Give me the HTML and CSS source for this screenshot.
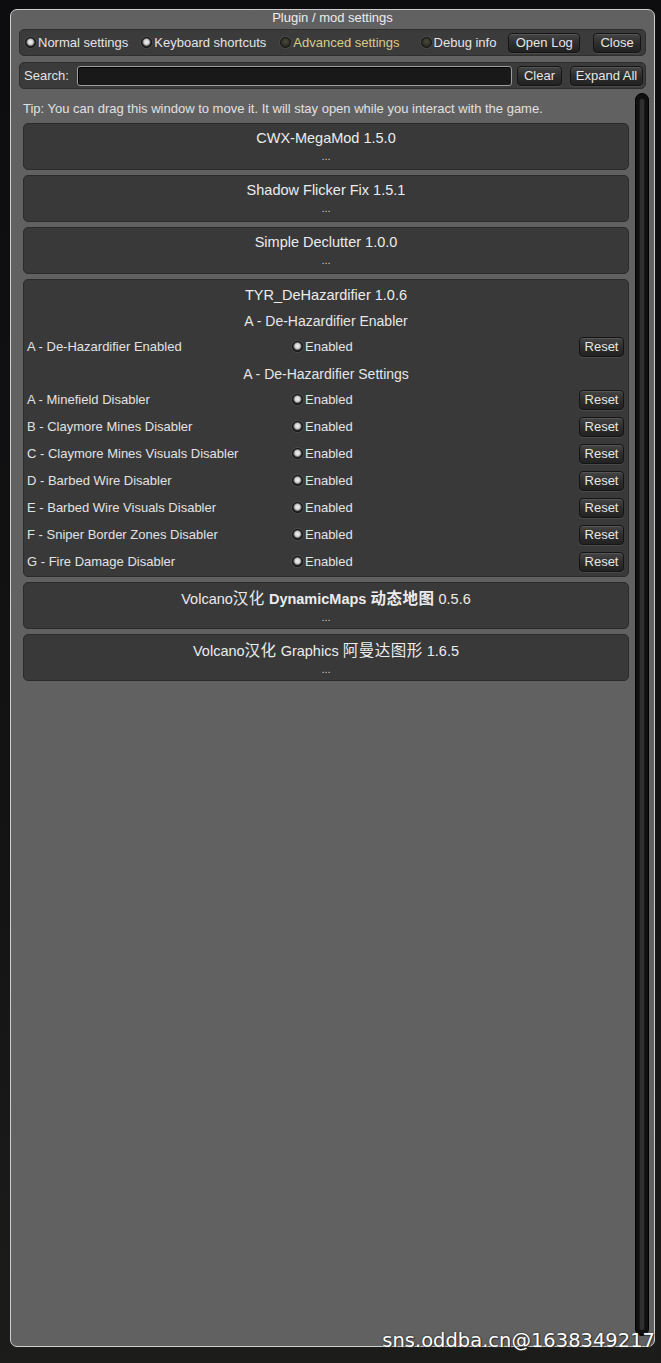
FILE: index.html
```html
<!DOCTYPE html>
<html lang="en">
<head>
<meta charset="UTF-8">
<meta name="viewport" content="width=device-width, initial-scale=1.0">
<title>Plugin / mod settings</title>
<link rel="stylesheet" href="styles.css">
</head>
<body>
<div class="window">
  <div class="window-title">Plugin / mod settings</div>

  <div class="toolbar">
    <label class="opt"><span class="radio on"></span>Normal settings</label>
    <label class="opt"><span class="radio on"></span>Keyboard shortcuts</label>
    <label class="opt opt-advanced"><span class="radio"></span>Advanced settings</label>
    <label class="opt opt-debug"><span class="radio"></span>Debug info</label>
    <button class="btn btn-log">Open Log</button>
    <button class="btn btn-close">Close</button>
  </div>

  <div class="searchbar">
    <span class="search-label">Search:</span>
    <input class="search-input" type="text">
    <button class="btn btn-clear">Clear</button>
    <button class="btn btn-expand">Expand All</button>
  </div>

  <div class="body-area">
    <div class="list">
      <p class="tip">Tip: You can drag this window to move it. It will stay open while you interact with the game.</p>

      <div class="plugin">
        <div class="plugin-name">CWX-MegaMod 1.5.0</div>
        <div class="plugin-dots">...</div>
      </div>
      <div class="plugin">
        <div class="plugin-name">Shadow Flicker Fix 1.5.1</div>
        <div class="plugin-dots">...</div>
      </div>
      <div class="plugin">
        <div class="plugin-name">Simple Declutter 1.0.0</div>
        <div class="plugin-dots">...</div>
      </div>

      <div class="plugin plugin-open">
        <div class="plugin-name">TYR_DeHazardifier 1.0.6</div>
        <div class="section">A - De-Hazardifier Enabler</div>
        <div class="setting">
          <span class="setting-name">A - De-Hazardifier Enabled</span>
          <label class="opt"><span class="radio on"></span>Enabled</label>
          <button class="btn btn-reset">Reset</button>
        </div>
        <div class="section section-gap">A - De-Hazardifier Settings</div>
        <div class="setting">
          <span class="setting-name">A - Minefield Disabler</span>
          <label class="opt"><span class="radio on"></span>Enabled</label>
          <button class="btn btn-reset">Reset</button>
        </div>
        <div class="setting">
          <span class="setting-name">B - Claymore Mines Disabler</span>
          <label class="opt"><span class="radio on"></span>Enabled</label>
          <button class="btn btn-reset">Reset</button>
        </div>
        <div class="setting">
          <span class="setting-name">C - Claymore Mines Visuals Disabler</span>
          <label class="opt"><span class="radio on"></span>Enabled</label>
          <button class="btn btn-reset">Reset</button>
        </div>
        <div class="setting">
          <span class="setting-name">D - Barbed Wire Disabler</span>
          <label class="opt"><span class="radio on"></span>Enabled</label>
          <button class="btn btn-reset">Reset</button>
        </div>
        <div class="setting">
          <span class="setting-name">E - Barbed Wire Visuals Disabler</span>
          <label class="opt"><span class="radio on"></span>Enabled</label>
          <button class="btn btn-reset">Reset</button>
        </div>
        <div class="setting">
          <span class="setting-name">F - Sniper Border Zones Disabler</span>
          <label class="opt"><span class="radio on"></span>Enabled</label>
          <button class="btn btn-reset">Reset</button>
        </div>
        <div class="setting">
          <span class="setting-name">G - Fire Damage Disabler</span>
          <label class="opt"><span class="radio on"></span>Enabled</label>
          <button class="btn btn-reset">Reset</button>
        </div>
      </div>

      <div class="plugin">
        <div class="plugin-name">Volcano<span class="cjk">汉化</span> <b>DynamicMaps <span class="cjk">动态地图</span></b> 0.5.6</div>
        <div class="plugin-dots">...</div>
      </div>
      <div class="plugin">
        <div class="plugin-name">Volcano<span class="cjk">汉化</span> Graphics <span class="cjk">阿曼达图形</span> 1.6.5</div>
        <div class="plugin-dots">...</div>
      </div>
    </div>
    <div class="scrollbar"><div class="scroll-thumb"></div></div>
  </div>
</div>
<div class="watermark">sns.oddba.cn@1638349217</div>
</body>
</html>
```

FILE: styles.css
```css
html, body {
  margin: 0;
  height: 100%;
}
body {
  background: linear-gradient(to bottom, #0d0d0f 0%, #131314 60%, #1c1c1b 100%);
  font-family: "Liberation Sans", Arial, "Noto Sans CJK SC", sans-serif;
  color: #e2e2e2;
  padding: 9px 0 0 10px;
  box-sizing: border-box;
  overflow: hidden;
  position: relative;
}
.window {
  width: 645px;
  height: 1338px;
  box-sizing: border-box;
  background-color: #616161;
  border: 1px solid #cfcfcf;
  border-radius: 7px;
  display: flex;
  flex-direction: column;
}
.window-title {
  height: 19px;
  line-height: 15px;
  text-align: center;
  font-size: 13px;
  color: #ececec;
}
.toolbar, .searchbar {
  height: 27px;
  margin: 0 8px;
  box-sizing: border-box;
  background-color: #3b3b3b;
  border: 1px solid #2e2e2e;
  border-radius: 5px;
  display: flex;
  align-items: center;
  font-size: 13px;
}
.toolbar {
  padding: 0 4px 0 5px;
  gap: 13px;
}
.searchbar {
  margin-top: 6px;
  padding: 0 2px 0 3px;
}
.opt {
  display: flex;
  align-items: center;
  color: #e4e4e4;
  white-space: nowrap;
}
.opt-advanced {
  color: #d8cb8a;
  margin-left: 1px;
}
.opt-debug {
  margin-left: 8px;
}
.radio {
  width: 11px;
  height: 11px;
  box-sizing: border-box;
  border-radius: 50%;
  margin-right: 2px;
  background: radial-gradient(circle at 50% 40%, #4d4b3e 0, #2e2d26 60%, #202020 100%);
  border: 1px solid #151515;
  box-shadow: 0 0 0 1px #4a4a4a;
}
.radio.on {
  background: radial-gradient(circle at 50% 45%, #f4f4f4 0, #d0d0d0 2.5px, #777 3.5px, #262626 4.5px);
  border-color: #111;
}
.btn {
  font-family: "Liberation Sans", Arial, sans-serif;
  font-size: 13px;
  color: #e6e6e6;
  height: 20px;
  padding: 0;
  white-space: nowrap;
  background: linear-gradient(to bottom, #454545 0%, #2e2e2e 50%, #222 100%);
  border: 1px solid #151515;
  border-radius: 4px;
  box-shadow: inset 0 1px 0 #555, 0 1px 0 #4a4a4a;
  line-height: 17px;
}
.btn-log {
  margin-left: -1px;
  width: 72px;
}
.btn-close {
  width: 48px;
}
.search-label {
  color: #e2e2e2;
  width: 44px;
  margin-left: 1px;
}
.search-input {
  flex: 1;
  height: 20px;
  box-sizing: border-box;
  margin: 0 5px 0 9px;
  background-color: #191919;
  border: 1px solid #9d9d9d;
  border-radius: 3px;
  box-shadow: inset 1px 1px 0 #000;
  outline: none;
}
.btn-clear {
  width: 45px;
  margin-right: 8px;
}
.btn-expand {
  width: 73px;
}
.body-area {
  flex: 1;
  display: flex;
  margin-top: 4px;
  padding: 0 5px 10px 8px;
  min-height: 0;
}
.list {
  flex: 1;
  padding: 0 4px;
}
.tip {
  margin: 8px 0 6px 0;
  font-size: 13px;
  line-height: 16px;
  color: #e0e0e0;
}
.plugin {
  background-color: #393939;
  border: 1px solid #2b2b2b;
  border-radius: 5px;
  box-sizing: border-box;
  height: 47px;
  margin-bottom: 5px;
  text-align: center;
}
.plugin-name {
  padding-top: 5px;
  font-size: 14.5px;
  line-height: 18px;
  color: #ececec;
}
.plugin-open .plugin-name {
  padding-top: 6px;
}
.plugin-name b {
  font-weight: bold;
}
.cjk {
  font-family: "Noto Sans CJK SC", sans-serif;
  font-size: 15.5px;
  letter-spacing: 0.5px;
}
.plugin-dots {
  font-size: 11px;
  line-height: 12px;
  margin-top: 3px;
  color: #cfcfcf;
}
.plugin-open {
  height: 298px;
}
.section {
  margin-top: 5px;
  height: 24px;
  line-height: 24px;
  font-size: 14px;
  color: #e6e6e6;
}
.section-gap {
  margin-top: 2px;
}
.setting {
  display: grid;
  grid-template-columns: 265px 1fr auto;
  align-items: center;
  height: 27px;
  padding: 0 4px 0 3px;
  text-align: left;
  font-size: 13px;
}
.setting-name {
  color: #e2e2e2;
}
.btn-reset {
  width: 45px;
}
.scrollbar {
  width: 14px;
  margin-left: 2px;
  background-color: #101010;
  border: 1px solid #000;
  border-radius: 7px;
  box-sizing: border-box;
  display: flex;
  justify-content: center;
  padding: 5px 0;
}
.scroll-thumb {
  width: 4px;
  background-color: #2f2f2f;
  border-left: 1px solid #1a1a1a;
  border-right: 1px solid #1a1a1a;
  border-radius: 2px;
}
.watermark {
  position: absolute;
  right: 6px;
  bottom: 12px;
  font-family: "DejaVu Sans", sans-serif;
  font-size: 19.5px;
  line-height: 20px;
  color: #ffffff;
  text-shadow: 0 0 2px #222, 1px 1px 1px #333;
}
```
